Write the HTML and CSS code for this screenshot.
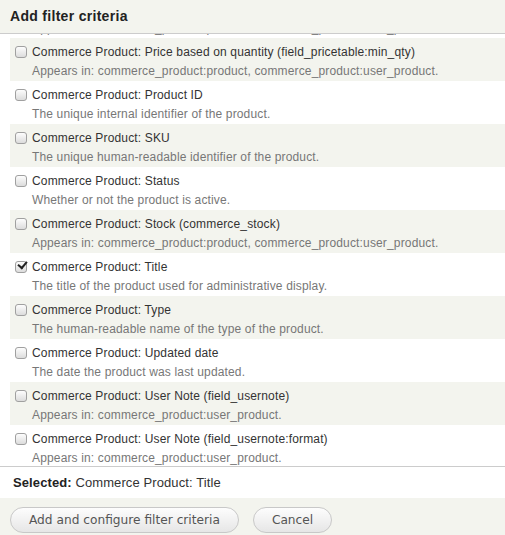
FILE: index.html
```html
<!DOCTYPE html>
<html lang="en">
<head>
    <meta charset="UTF-8">
    <meta name="viewport" content="width=device-width, initial-scale=1.0">
    <title>Add filter criteria</title>
    <link rel="stylesheet" href="styles.css">
</head>
<body>
    <div class="dialog">
        <div class="dialog-title">Add filter criteria</div>

        <div class="filter-list" id="filterList">
            <div class="filter-item odd">
                <label class="filter-name"><input type="checkbox"> Commerce Product: Price (commerce_price:currency_code)</label>
                <div class="filter-desc">Appears in: commerce_product:product, commerce_product:user_product.</div>
            </div>
            <div class="filter-item">
                <label class="filter-name"><input type="checkbox"> Commerce Product: Price based on quantity (field_pricetable:amount)</label>
                <div class="filter-desc">Appears in: commerce_product:product, commerce_product:user_product.</div>
            </div>
            <div class="filter-item odd">
                <label class="filter-name"><input type="checkbox"> Commerce Product: Price based on quantity (field_pricetable:min_qty)</label>
                <div class="filter-desc">Appears in: commerce_product:product, commerce_product:user_product.</div>
            </div>
            <div class="filter-item">
                <label class="filter-name"><input type="checkbox"> Commerce Product: Product ID</label>
                <div class="filter-desc">The unique internal identifier of the product.</div>
            </div>
            <div class="filter-item odd">
                <label class="filter-name"><input type="checkbox"> Commerce Product: SKU</label>
                <div class="filter-desc">The unique human-readable identifier of the product.</div>
            </div>
            <div class="filter-item">
                <label class="filter-name"><input type="checkbox"> Commerce Product: Status</label>
                <div class="filter-desc">Whether or not the product is active.</div>
            </div>
            <div class="filter-item odd">
                <label class="filter-name"><input type="checkbox"> Commerce Product: Stock (commerce_stock)</label>
                <div class="filter-desc">Appears in: commerce_product:product, commerce_product:user_product.</div>
            </div>
            <div class="filter-item">
                <label class="filter-name"><input type="checkbox" checked> Commerce Product: Title</label>
                <div class="filter-desc">The title of the product used for administrative display.</div>
            </div>
            <div class="filter-item odd">
                <label class="filter-name"><input type="checkbox"> Commerce Product: Type</label>
                <div class="filter-desc">The human-readable name of the type of the product.</div>
            </div>
            <div class="filter-item">
                <label class="filter-name"><input type="checkbox"> Commerce Product: Updated date</label>
                <div class="filter-desc">The date the product was last updated.</div>
            </div>
            <div class="filter-item odd">
                <label class="filter-name"><input type="checkbox"> Commerce Product: User Note (field_usernote)</label>
                <div class="filter-desc">Appears in: commerce_product:user_product.</div>
            </div>
            <div class="filter-item">
                <label class="filter-name"><input type="checkbox"> Commerce Product: User Note (field_usernote:format)</label>
                <div class="filter-desc">Appears in: commerce_product:user_product.</div>
            </div>
            <div class="filter-item odd">
                <label class="filter-name"><input type="checkbox"> Commerce Product: User Note (field_usernote:value)</label>
                <div class="filter-desc">Appears in: commerce_product:user_product.</div>
            </div>
        </div>

        <div class="selected"><strong>Selected:</strong> Commerce Product: Title</div>

        <div class="actions">
            <button type="button">Add and configure filter criteria</button>
            <button type="button">Cancel</button>
        </div>
    </div>

    <script src="script.js"></script>
</body>
</html>
```

FILE: styles.css
```css
body {
    margin: 0;
    font-family: "Liberation Sans", Arial, sans-serif;
    color: #333;
    background: #fff;
}
.dialog {
    width: 505px;
    height: 535px;
    overflow: hidden;
}
.dialog-title {
    height: 33px;
    line-height: 32px;
    padding-left: 10px;
    font-size: 14px;
    font-weight: bold;
    letter-spacing: 0.3px;
    color: #222;
    background: #f3f4ee;
    border-bottom: 1px solid #ccc;
}
.filter-list {
    height: 432px;
    overflow: hidden;
    padding-left: 10px;
    border-bottom: 1px solid #ccc;
}
.filter-item {
    height: 43px;
    box-sizing: border-box;
    padding: 4px 0 0 5px;
    font-size: 12px;
    letter-spacing: 0.15px;
}
.filter-item.odd {
    background: #f3f4ee;
}
.filter-name {
    display: flex;
    align-items: center;
    height: 20px;
    color: #333;
    white-space: nowrap;
}
.filter-name input {
    -webkit-appearance: none;
    appearance: none;
    position: relative;
    width: 12px;
    height: 12px;
    margin: 0 5px 0 0;
    border: 1px solid #a0a0a0;
    border-radius: 3px;
    background: linear-gradient(#fdfdfd, #dcdcdc);
    box-sizing: border-box;
}
.filter-name input:checked::after {
    content: "";
    position: absolute;
    left: 2px;
    top: -1px;
    width: 7px;
    height: 4px;
    border-left: 2px solid #222;
    border-bottom: 2px solid #222;
    transform: rotate(-50deg);
}
.filter-desc {
    height: 19px;
    line-height: 19px;
    padding-left: 17px;
    color: #777;
    white-space: nowrap;
}
.selected {
    height: 31px;
    line-height: 31px;
    padding-left: 13px;
    font-size: 13px;
    letter-spacing: 0.1px;
    color: #333;
}
.selected strong {
    color: #222;
}
.actions {
    display: flex;
    gap: 14px;
    height: 37px;
    box-sizing: border-box;
    padding: 9px 0 0 10px;
    background: #f3f4ee;
}
.actions button {
    height: 26px;
    padding: 0 18px;
    font-family: "DejaVu Sans", sans-serif;
    font-size: 12.2px;
    color: #555;
    border: 1px solid #c8c8c8;
    border-radius: 13px;
    background: linear-gradient(#fdfdfd, #e6e6e6);
}
```

FILE: script.js
```js
// show the list scrolled to the part in the screenshot
document.getElementById('filterList').scrollTop = 82;
```
